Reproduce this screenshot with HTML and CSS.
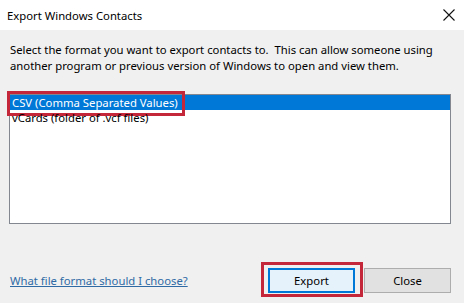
FILE: index.html
```html
<!DOCTYPE html>
<html>
<head>
<meta charset="utf-8">
<link rel="stylesheet" href="styles.css">
</head>
<body>
<div class="dialog">
  <div class="titlebar">
    <span class="title">Export Windows Contacts</span>
    <svg class="close-x" width="12" height="12" viewBox="0 0 12 12"><path d="M0.5 0.5 L11.5 11.5 M11.5 0.5 L0.5 11.5" stroke="#111" stroke-width="1.1" fill="none"/></svg>
  </div>
  <div class="content">
    <p class="desc">Select the format you want to export contacts to.&nbsp; This can allow someone using another program or previous version of Windows to open and view them.</p>
    <div class="listbox">
      <div class="item selected">CSV (Comma Separated Values)<span class="mark mark-csv"></span></div>
      <div class="item">vCards (folder of .vcf files)</div>
    </div>
    <div class="footer">
      <a class="help" href="#">What file format should I choose?</a>
      <div class="buttons">
        <button class="btn primary">Export<span class="mark mark-btn"></span></button>
        <button class="btn">Close</button>
      </div>
    </div>
  </div>
</div>
</body>
</html>
```
FILE: styles.css
```css
html, body {
  margin: 0;
  padding: 0;
}
body {
  width: 464px;
  height: 303px;
  overflow: hidden;
  font-family: "Noto Sans", "Open Sans", sans-serif;
  font-size: 11.3px;
  color: #000;
}
.dialog {
  width: 464px;
  height: 303px;
  display: flex;
  flex-direction: column;
  background: #f0f0f0;
}
.titlebar {
  height: 30px;
  background: #fff;
  display: flex;
  align-items: center;
  justify-content: space-between;
  padding: 0 9px 0 7px;
  flex: none;
}
.title {
  font-size: 11.3px;
  color: #000;
}
.close-x {
  display: block;
}
.content {
  flex: 1;
  display: flex;
  flex-direction: column;
  padding: 12px 13px 10px 10px;
}
.desc {
  margin: 0;
  line-height: 16px;
  width: 440px;
}
.listbox {
  margin-top: 20px;
  margin-left: -1px;
  height: 128px;
  background: #fff;
  border: 1px solid #828790;
}
.item {
  position: relative;
  height: 15px;
  line-height: 15px;
  padding-left: 2px;
  white-space: nowrap;
}
.item.selected {
  background: #0078d7;
  color: #fff;
}
.mark {
  position: absolute;
  border: 3px solid #c4263a;
  pointer-events: none;
}
.mark-csv {
  left: -3px;
  top: -4px;
  width: 172px;
  height: 19px;
}
.footer {
  margin-top: auto;
  display: flex;
  align-items: center;
  justify-content: space-between;
}
.help {
  color: #2f6aa5;
  text-decoration: underline;
  font-size: 11.3px;
}
.buttons {
  display: flex;
  gap: 9px;
}
.btn {
  position: relative;
  font-family: inherit;
  font-size: 11.3px;
  width: 87px;
  height: 25px;
  background: #e1e1e1;
  border: 1px solid #adadad;
  padding: 0;
  color: #000;
}
.btn.primary {
  border: 2px solid #0078d7;
  background: #e5f1fb;
}
.mark-btn {
  left: -9px;
  top: -8px;
  width: 96px;
  height: 29px;
}
```
